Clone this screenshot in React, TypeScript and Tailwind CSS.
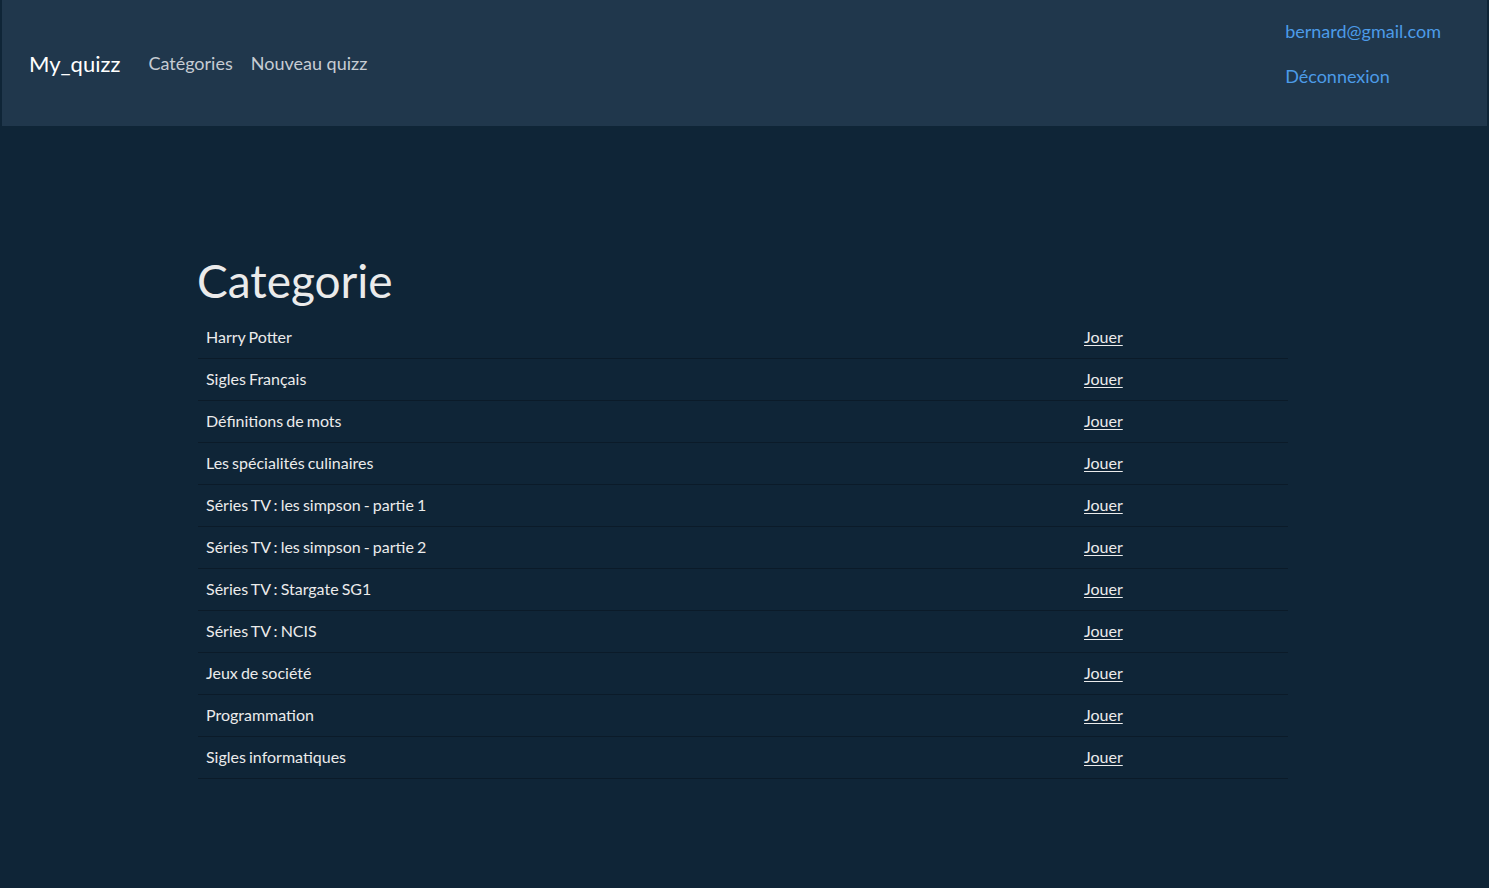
import React from "react";

const cats = [
  "Harry Potter",
  "Sigles Français",
  "Définitions de mots",
  "Les spécialités culinaires",
  "Séries TV : les simpson - partie 1",
  "Séries TV : les simpson - partie 2",
  "Séries TV : Stargate SG1",
  "Séries TV : NCIS",
  "Jeux de société",
  "Programmation",
  "Sigles informatiques",
];

export default function App() {
  return (
    <div
      className="min-h-[888px] bg-[#0f2537] text-[#ebebeb]"
      style={{ fontFamily: "Lato, 'Noto Sans', sans-serif" }}
    >
      <div className="px-[2px]">
        <nav className="h-[126px] bg-[#20374c] flex items-center pl-[27px] pr-[46px]">
          <a className="text-[22px] text-white mr-[28px]">My_quizz</a>
          <div className="flex items-center gap-[18px] text-[18px] text-[#c6ccd3]">
            <a>Catégories</a>
            <a>Nouveau quizz</a>
          </div>
          <div className="ml-auto self-start flex flex-col pt-[18px] gap-[18px] text-[18px] text-[#4c9be8]">
            <a className="leading-[27px] -ml-[1px]">bernard@gmail.com</a>
            <a className="leading-[27px] -ml-[1px]">Déconnexion</a>
          </div>
        </nav>
      </div>
      <main className="w-[1090px] ml-[198px] pt-[126px]">
        <h1 className="text-[46px] leading-[58px] font-normal mb-[6px] -ml-[1px]">Categorie</h1>
        <table className="w-full border-collapse text-[16px] [word-spacing:-1px]">
          <tbody>
            {cats.map((c) => (
              <tr key={c} className="h-[42px] border-b border-[#0b1b29]">
                <td className="pl-[8px] w-[878px]">{c}</td>
                <td className="pl-[8px]">
                  <a className="underline underline-offset-[2px]">Jouer</a>
                </td>
              </tr>
            ))}
          </tbody>
        </table>
      </main>
    </div>
  );
}
